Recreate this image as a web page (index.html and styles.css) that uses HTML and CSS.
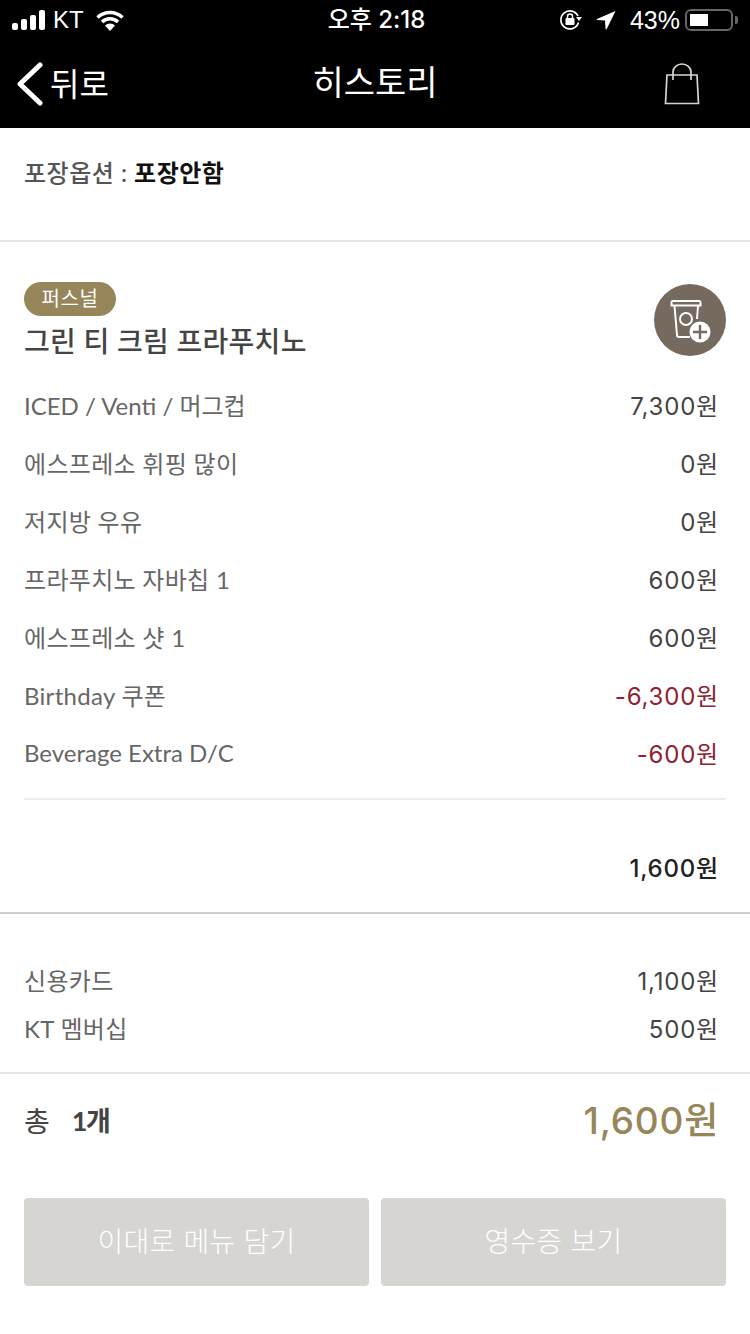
FILE: index.html
```html
<!DOCTYPE html>
<html lang="ko">
<head>
    <meta charset="UTF-8">
    <meta name="viewport" content="width=device-width, initial-scale=1.0">
    <title>히스토리</title>
    <link rel="stylesheet" href="styles.css">
</head>
<body>
    <header class="top">
        <!-- Status Bar -->
        <div class="status-bar">
            <div class="status-left">
                <svg class="signal" width="34" height="20" viewBox="0 0 34 20">
                    <rect x="0" y="13" width="6" height="7" rx="2" fill="#fff"/>
                    <rect x="9" y="9" width="6" height="11" rx="2" fill="#fff"/>
                    <rect x="18" y="5" width="6" height="15" rx="2" fill="#fff"/>
                    <rect x="27" y="0" width="6" height="20" rx="2" fill="#fff"/>
                </svg>
                <span class="carrier">KT</span>
                <svg class="wifi" width="28" height="21" viewBox="0 0 28 21">
                    <path d="M1.500 7.500a18 18 0 0 1 25 0" fill="none" stroke="#fff" stroke-width="3.400"/>
                    <path d="M6 12a11.500 11.500 0 0 1 16 0" fill="none" stroke="#fff" stroke-width="3.400"/>
                    <path d="M9 15.500a7 7 0 0 1 10 0L14 21z" fill="#fff"/>
                </svg>
            </div>
            <div class="status-time">오후 2:18</div>
            <div class="status-right">
                <svg width="24" height="22" viewBox="0 0 24 22">
                    <path d="M19.500 13.500A9 9 0 1 1 19 7" fill="none" stroke="#fff" stroke-width="1.700"/>
                    <path d="M17 8h6l-3 4z" fill="#fff"/>
                    <rect x="6.500" y="9" width="9" height="7" rx="1" fill="#fff"/>
                    <path d="M8.500 9V7.500a2.500 2.500 0 0 1 5 0V9" fill="none" stroke="#fff" stroke-width="1.500"/>
                </svg>
                <svg class="arrow" width="20" height="20" viewBox="0 0 20 20">
                    <path d="M19.500 1L10.500 19.500Q9.500 19.500 9.500 18.500L9 10.500L1 10Q0 9.500 1 9z" fill="#fff"/>
                </svg>
                <span class="battery-text">43%</span>
                <div class="battery"><div class="battery-fill"></div></div>
                <div class="battery-tip"></div>
            </div>
        </div>

        <!-- Nav Bar -->
        <nav class="nav-bar">
            <div class="nav-back">
                <svg width="28" height="44" viewBox="0 0 28 44">
                    <path d="M24 3L4 22l20 19" fill="none" stroke="#fff" stroke-width="5" stroke-linecap="round" stroke-linejoin="round"/>
                </svg>
                <span>뒤로</span>
            </div>
            <h1 class="nav-title">히스토리</h1>
            <svg class="nav-bag" width="36" height="42" viewBox="0 0 36 42">
                <path d="M3 12h30l1.500 28.500h-33z" fill="none" stroke="#d8d6d0" stroke-width="1.700"/>
                <path d="M9 17V9a9 8 0 0 1 18 0v8" fill="none" stroke="#d8d6d0" stroke-width="1.700"/>
            </svg>
        </nav>
    </header>

    <!-- Package Option -->
    <section class="package">
        <span class="package-label">포장옵션 :</span>
        <strong class="package-value">포장안함</strong>
    </section>

    <!-- Order Item -->
    <section class="item">
        <div class="item-head">
            <div>
                <span class="size-badge">퍼스널</span>
                <h2 class="item-name">그린 티 크림 프라푸치노</h2>
            </div>
            <div class="add-button">
                <svg width="44" height="50" viewBox="0 0 44 50">
                    <path d="M3.500 7.500a1.500 1.500 0 0 1 1.500-1.500h26a1.500 1.500 0 0 1 1.500 1.500v3h-29z" fill="none" stroke="#fff" stroke-width="2"/>
                    <path d="M6.500 11l2.500 29a2 2 0 0 0 2 2h11M30 11l-1 13" fill="none" stroke="#fff" stroke-width="2"/>
                    <circle cx="18" cy="24" r="6" fill="none" stroke="#fff" stroke-width="2"/>
                    <circle cx="32" cy="37" r="10.500" fill="#fff"/>
                    <path d="M32 30v14M25 37h14" stroke="#76695e" stroke-width="2.400"/>
                </svg>
            </div>
        </div>

        <ul class="option-list">
            <li class="option-row"><span class="option-latin">ICED / Venti / 머그컵</span><span class="price">7,300원</span></li>
            <li class="option-row"><span>에스프레소 휘핑 많이</span><span class="price">0원</span></li>
            <li class="option-row"><span>저지방 우유</span><span class="price">0원</span></li>
            <li class="option-row"><span>프라푸치노 자바칩 1</span><span class="price">600원</span></li>
            <li class="option-row"><span>에스프레소 샷 1</span><span class="price">600원</span></li>
            <li class="option-row"><span>Birthday 쿠폰</span><span class="price discount">-6,300원</span></li>
            <li class="option-row"><span class="option-latin">Beverage Extra D/C</span><span class="price discount">-600원</span></li>
        </ul>

        <div class="item-total price">1,600원</div>
    </section>

    <!-- Payment -->
    <section class="payment">
        <div class="pay-row"><span>신용카드</span><span class="price">1,100원</span></div>
        <div class="pay-row"><span>KT 멤버십</span><span class="price">500원</span></div>
    </section>

    <!-- Total -->
    <section class="total">
        <div class="total-count"><span>총</span><strong>1개</strong></div>
        <div class="total-price">1,600원</div>
    </section>

    <!-- Buttons -->
    <div class="actions">
        <button class="action-btn">이대로 메뉴 담기</button>
        <button class="action-btn">영수증 보기</button>
    </div>
</body>
</html>
```

FILE: styles.css
```css
/* General Styles */
* {
    box-sizing: border-box;
}

body {
    margin: 0;
    width: 750px;
    height: 1334px;
    overflow: hidden;
    background-color: #fff;
    color: #666;
    font-family: Lato, "Noto Sans CJK KR", sans-serif;
    font-size: 24px;
    font-weight: 400;
    letter-spacing: 0.3px;
}

/* Header */
.top {
    height: 128px;
    background-color: #000;
    color: #fff;
    letter-spacing: 0;
}

.status-bar {
    height: 40px;
    padding: 0 12px;
    display: grid;
    grid-template-columns: 1fr auto 1fr;
    align-items: center;
}

.status-left {
    display: flex;
    align-items: center;
}

.carrier {
    margin-left: 7px;
    font-family: "Liberation Sans", sans-serif;
    font-size: 24px;
    line-height: 40px;
}

.wifi {
    margin-left: 12px;
}

.status-time {
    margin-left: 3px;
    font-family: Inter, "Noto Sans CJK KR", sans-serif;
    font-size: 24px;
    font-weight: 500;
    line-height: 40px;
}

.status-right {
    display: flex;
    align-items: center;
    justify-content: flex-end;
}

.arrow {
    margin-left: 13px;
}

.battery-text {
    margin-left: 14px;
    font-family: "Liberation Sans", sans-serif;
    font-size: 25px;
}

.battery {
    margin-left: 5px;
    width: 48px;
    height: 22px;
    padding: 3px;
    border: 2px solid #666;
    border-radius: 6px;
}

.battery-fill {
    width: 18px;
    height: 12px;
    background-color: #fff;
}

.battery-tip {
    width: 3px;
    height: 8px;
    margin-left: 2px;
    background-color: #666;
    border-radius: 0 2px 2px 0;
}

.nav-bar {
    position: relative;
    height: 88px;
    padding: 0 24px 0 16px;
    display: flex;
    align-items: center;
    justify-content: space-between;
}

.nav-back {
    display: flex;
    align-items: center;
    font-size: 32px;
    font-weight: 400;
    gap: 6px;
}

.nav-back span {
    position: relative;
    top: -2px;
}

.nav-title {
    position: absolute;
    left: 0;
    right: 0;
    top: 18px;
    margin: 0;
    text-align: center;
    font-size: 34px;
    font-weight: 400;
    line-height: 48px;
}

.nav-bag {
    margin-right: 26px;
}

/* Package Option */
.package {
    height: 114px;
    padding-top: 25px;
    border-bottom: 2px solid #e6e6e4;
    padding-left: 24px;
    line-height: 40px;
    font-size: 24px;
    letter-spacing: 0.5px;
}

.package-label {
    color: #555;
    font-weight: 500;
}

.package-value {
    color: #111;
    font-weight: 700;
    letter-spacing: 0.5px;
}

/* Order Item */
.item {
    padding: 40px 24px 0;
    height: 672px;
    border-bottom: 2px solid #ccc;
}

.item-head {
    height: 94px;
    display: flex;
    justify-content: space-between;
    align-items: flex-start;
}

.size-badge {
    display: block;
    width: 92px;
    height: 34px;
    border-radius: 17px;
    background-color: #97865a;
    color: #fff;
    font-size: 20px;
    letter-spacing: 0.6px;
    line-height: 33px;
    text-align: center;
}

.item-name {
    margin: 0;
    color: #444;
    font-size: 28px;
    font-weight: 500;
    line-height: 50px;
}

.add-button {
    width: 72px;
    height: 72px;
    margin-top: 2px;
    border-radius: 50%;
    background-color: #76695e;
    display: flex;
    align-items: center;
    justify-content: center;
}

.option-list {
    margin: 0;
    padding: 0 0 16px;
    list-style: none;
    border-bottom: 2px solid #ececea;
}

.option-row {
    height: 58px;
    padding: 0 7px 2px 0;
    display: flex;
    justify-content: space-between;
    align-items: center;
}

.option-latin {
    letter-spacing: 0;
}

.price {
    color: #444;
    font-family: Inter, "Noto Sans CJK KR", sans-serif;
    font-weight: 400;
    letter-spacing: 0.8px;
}

.price.discount {
    color: #8c2232;
}

.item-total {
    padding: 49px 7px 0 0;
    text-align: right;
    color: #222;
    font-weight: 500;
    line-height: 40px;
}

/* Payment */
.payment {
    height: 160px;
    padding: 41px 24px 0;
    border-bottom: 2px solid #e6e6e4;
}

.pay-row {
    height: 48px;
    padding-right: 7px;
    display: flex;
    justify-content: space-between;
    align-items: center;
}

/* Total */
.total {
    height: 124px;
    padding: 0 31px 0 24px;
    display: flex;
    justify-content: space-between;
    align-items: flex-start;
}

.total-count {
    display: flex;
    gap: 22px;
    color: #444;
    font-size: 28px;
    line-height: 94px;
    letter-spacing: 0;
}

.total-count strong {
    font-size: 27px;
    font-weight: 700;
    letter-spacing: -1.5px;
}

.total-price {
    color: #97865a;
    font-family: Inter, "Noto Sans CJK KR", sans-serif;
    font-size: 37px;
    font-weight: 500;
    letter-spacing: 0.8px;
    line-height: 94px;
}

/* Buttons */
.actions {
    padding: 0 24px;
    display: flex;
    gap: 12px;
}

.action-btn {
    flex: 1;
    height: 88px;
    padding-bottom: 6px;
    border: none;
    border-radius: 4px;
    background-color: #d6d5d1;
    color: #fff;
    font-family: "Noto Sans CJK KR", sans-serif;
    font-size: 28px;
    font-weight: 300;
    letter-spacing: 0.2px;
}
```
